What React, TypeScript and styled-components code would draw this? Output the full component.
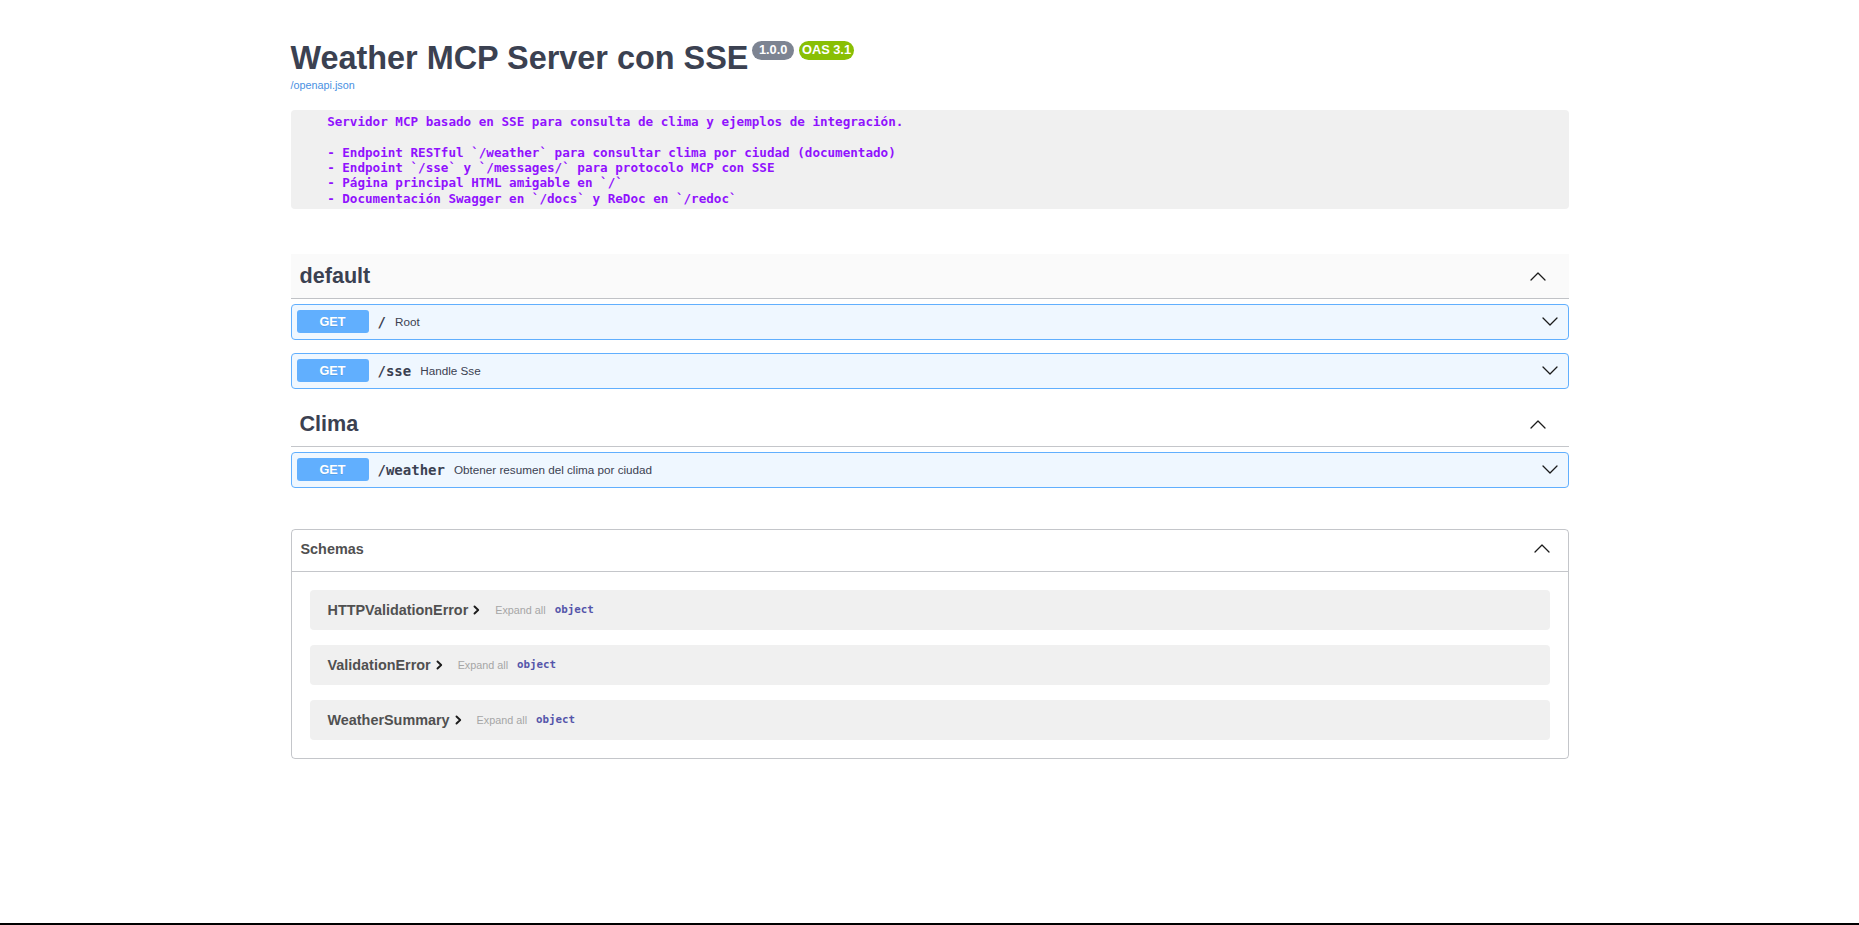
import React from "react";
import styled, { createGlobalStyle } from "styled-components";

const GlobalStyle = createGlobalStyle`
  html, body { margin: 0; padding: 0; background: #fff; }
  body { font-family: "Liberation Sans", Arial, sans-serif; color: #3b4151; }
  * { box-sizing: border-box; }
`;

const Page = styled.div`
  min-height: 100vh;
  border-bottom: 2px solid #000;
`;

const Wrapper = styled.div`
  width: 1278px;
  margin: 0 auto;
  padding: 39.6px 0 40px;
`;

const TitleRow = styled.div`
  display: flex;
  align-items: flex-start;
`;

const Title = styled.h2`
  margin: 0;
  font-size: 32.4px;
  line-height: 37px;
  font-weight: 700;
  color: #3b4151;
`;

const Badge = styled.span<{ $tone: "grey" | "green"; $gap: number }>`
  margin: 1.4px 0 0 ${(p) => p.$gap}px;
  padding: 2.5px 3px;
  border-radius: 57px;
  background: ${(p) => (p.$tone === "green" ? "#89bf04" : "#7d8492")};
  color: #fff;
  font-size: 12.8px;
  line-height: 14.5px;
  font-weight: 700;
  white-space: pre;
`;

const SpecLink = styled.a`
  display: block;
  margin-top: 2.8px;
  font-size: 10.8px;
  line-height: 12.4px;
  color: #4990e2;
  text-decoration: none;
`;

const Description = styled.pre`
  margin: 18.2px 0 0;
  padding: 4.5px 6.3px 3.3px;
  background: #f0f0f0;
  border-radius: 4px;
  font-family: "DejaVu Sans Mono", "Liberation Mono", monospace;
  font-size: 12.6px;
  line-height: 15.2px;
  font-weight: 700;
  color: #9012fe;
  white-space: pre;
`;

const Operations = styled.div`
  margin-top: 45px;
`;

const TagSection = styled.section``;

const TagHeader = styled.div<{ $hover?: boolean }>`
  display: flex;
  align-items: center;
  justify-content: space-between;
  height: 45px;
  padding: 0 23px 0 9px;
  margin-bottom: 5px;
  border-bottom: 1px solid rgba(59, 65, 81, 0.3);
  background: ${(p) => (p.$hover ? "#fafafa" : "transparent")};
`;

const TagName = styled.h3`
  margin: 0;
  font-size: 21.6px;
  line-height: 26px;
  font-weight: 700;
  color: #3b4151;
`;

const Opblock = styled.div`
  display: flex;
  align-items: center;
  height: 35.5px;
  margin-bottom: 13.5px;
  padding: 0 10px 0 5px;
  border: 1px solid #61affe;
  border-radius: 4px;
  background: rgba(97, 175, 254, 0.1);
`;

const Method = styled.span`
  display: flex;
  align-items: center;
  justify-content: center;
  flex-shrink: 0;
  width: 72px;
  height: 23.3px;
  border-radius: 3px;
  background: #61affe;
  color: #fff;
  font-size: 12.6px;
  font-weight: 700;
  text-shadow: 0 1px 0 rgba(0, 0, 0, 0.1);
`;

const Path = styled.span`
  padding: 0 9px;
  font-family: "DejaVu Sans Mono", "Liberation Mono", monospace;
  font-size: 14px;
  font-weight: 700;
  color: #3b4151;
`;

const Summary = styled.span`
  flex: 1;
  font-size: 11.7px;
  color: #3b4151;
`;

const ChevronSvg = styled.svg`
  flex-shrink: 0;
  fill: none;
  stroke: #1b1b1b;
  stroke-width: 1.3;
  stroke-linecap: round;
  stroke-linejoin: round;
`;

const Chevron = ({ dir }: { dir: "up" | "down" }) => (
  <ChevronSvg width="16" height="9" viewBox="0 0 16 9">
    <polyline points={dir === "up" ? "1,8 8,1 15,8" : "1,1 8,8 15,1"} />
  </ChevronSvg>
);

const SmallChevronSvg = styled.svg`
  flex-shrink: 0;
  margin: 1px 0 0 5px;
  fill: none;
  stroke: #1b1b1b;
  stroke-width: 1.9;
  stroke-linecap: round;
  stroke-linejoin: round;
`;

const SmallChevron = () => (
  <SmallChevronSvg width="7" height="10" viewBox="0 0 7 10">
    <polyline points="1.5,1.5 5.2,5 1.5,8.5" />
  </SmallChevronSvg>
);

const Models = styled.section`
  margin-top: 41.5px;
  border: 1px solid rgba(59, 65, 81, 0.3);
  border-radius: 4px;
`;

const ModelsHeader = styled.div`
  display: flex;
  align-items: center;
  justify-content: space-between;
  height: 42px;
  padding: 0 17.5px 4px 9px;
  border-bottom: 1px solid rgba(59, 65, 81, 0.3);
`;

const ModelsTitle = styled.h4`
  margin: 0;
  font-size: 14.4px;
  font-weight: 700;
  color: #505050;
`;

const ModelsBody = styled.div`
  display: flex;
  flex-direction: column;
  gap: 15.5px;
  padding: 18px 18px 18px;
`;

const ModelRow = styled.div`
  display: flex;
  align-items: center;
  min-height: 39.5px;
  padding-left: 18px;
  border-radius: 4px;
  background: #f0f0f0;
`;

const ModelName = styled.span`
  font-size: 14.4px;
  font-weight: 700;
  color: #505050;
`;

const ExpandAll = styled.span`
  margin-left: 15px;
  font-size: 10.8px;
  color: #a6a6a6;
`;

const PropType = styled.span`
  margin-left: 9px;
  font-family: "DejaVu Sans Mono", "Liberation Mono", monospace;
  font-size: 10.8px;
  font-weight: 700;
  color: #55a;
`;

const description = [
  "    Servidor MCP basado en SSE para consulta de clima y ejemplos de integración.",
  "",
  "    - Endpoint RESTful `/weather` para consultar clima por ciudad (documentado)",
  "    - Endpoint `/sse` y `/messages/` para protocolo MCP con SSE",
  "    - Página principal HTML amigable en `/`",
  "    - Documentación Swagger en `/docs` y ReDoc en `/redoc`",
].join("\n");

const tags = [
  {
    name: "default",
    hover: true,
    ops: [
      { path: "/", summary: "Root" },
      { path: "/sse", summary: "Handle Sse" },
    ],
  },
  {
    name: "Clima",
    hover: false,
    ops: [{ path: "/weather", summary: "Obtener resumen del clima por ciudad" }],
  },
];

const schemas = ["HTTPValidationError", "ValidationError", "WeatherSummary"];

export default function App() {
  return (
    <Page>
      <GlobalStyle />
      <Wrapper>
        <TitleRow>
          <Title>Weather MCP Server con SSE</Title>
          <Badge $tone="grey" $gap={4}>{" 1.0.0 "}</Badge>
          <Badge $tone="green" $gap={5}>OAS 3.1</Badge>
        </TitleRow>
        <SpecLink href="#">/openapi.json</SpecLink>
        <Description>{description}</Description>

        <Operations>
          {tags.map((tag) => (
            <TagSection key={tag.name}>
              <TagHeader $hover={tag.hover}>
                <TagName>{tag.name}</TagName>
                <Chevron dir="up" />
              </TagHeader>
              {tag.ops.map((op) => (
                <Opblock key={op.path}>
                  <Method>GET</Method>
                  <Path>{op.path}</Path>
                  <Summary>{op.summary}</Summary>
                  <Chevron dir="down" />
                </Opblock>
              ))}
            </TagSection>
          ))}
        </Operations>

        <Models>
          <ModelsHeader>
            <ModelsTitle>Schemas</ModelsTitle>
            <Chevron dir="up" />
          </ModelsHeader>
          <ModelsBody>
            {schemas.map((s) => (
              <ModelRow key={s}>
                <ModelName>{s}</ModelName>
                <SmallChevron />
                <ExpandAll>Expand all</ExpandAll>
                <PropType>object</PropType>
              </ModelRow>
            ))}
          </ModelsBody>
        </Models>
      </Wrapper>
    </Page>
  );
}
